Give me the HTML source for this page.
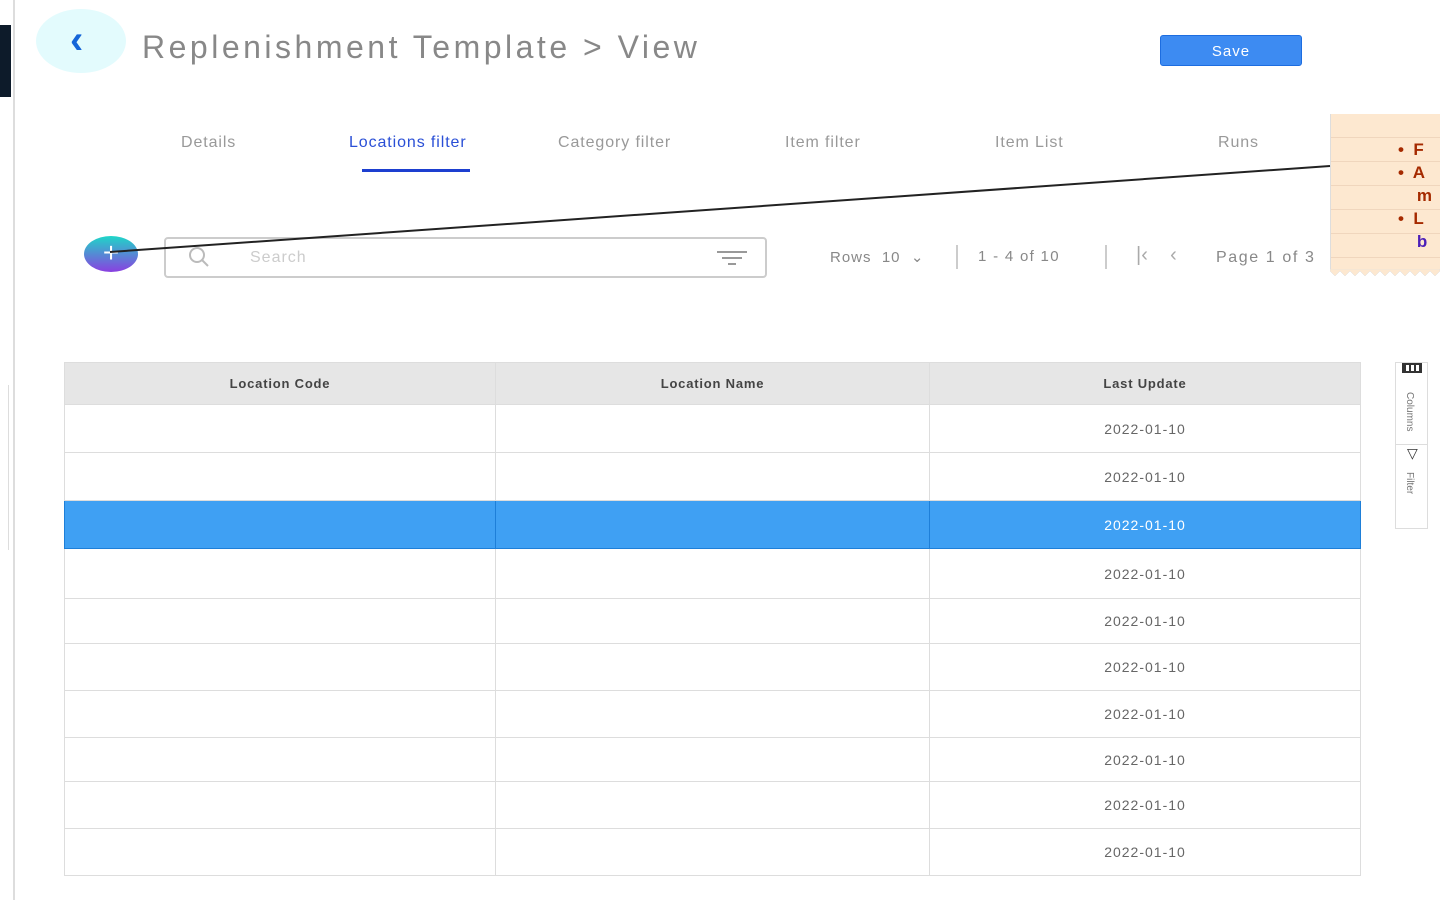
<!DOCTYPE html>
<html><head><style>
body{margin:0;width:1440px;height:900px;background:#fff;font-family:"Liberation Sans",sans-serif;position:relative;overflow:hidden}
.a{position:absolute}
.tab{position:absolute;top:134px;font-size:16px;color:#999;letter-spacing:0.9px}
table{position:absolute;left:64px;top:362px;border-collapse:collapse;width:1297px}
td,th{border:1px solid #ddd;text-align:center;font-size:14px;color:#666;padding:0;letter-spacing:1px}
th{background:#e6e6e6;color:#444;font-size:13px;height:41px;letter-spacing:0.8px}
</style></head><body>
<div class="a" style="left:0;top:25px;width:11px;height:72px;background:#0d1b2a"></div>
<div class="a" style="left:13px;top:0;width:2px;height:900px;background:#ddd"></div>
<div class="a" style="left:0;top:385px;width:8px;height:165px;border-right:1px solid #ddd"></div>
<div class="a" style="left:36px;top:9px;width:90px;height:64px;border-radius:50%;background:#e3fbfd"></div>
<div class="a" style="left:70px;top:18px;font-size:40px;color:#1565d8;font-weight:bold">&lsaquo;</div>
<div class="a" style="left:142px;top:29px;font-size:32px;color:#888;letter-spacing:3.5px">Replenishment Template &gt; View</div>
<div class="a" style="left:1160px;top:35px;width:142px;height:31px;background:#3d8bf2;border:1px solid #1d6de0;border-radius:3px;color:#fff;font-size:15px;text-align:center;line-height:31px;box-sizing:border-box;letter-spacing:1px">Save</div>
<div class="tab" style="left:181px">Details</div>
<div class="tab" style="left:349px;color:#2a4fd6">Locations filter</div>
<div class="a" style="left:362px;top:169px;width:108px;height:3px;background:#1d3fd0"></div>
<div class="tab" style="left:558px">Category filter</div>
<div class="tab" style="left:785px">Item filter</div>
<div class="tab" style="left:995px">Item List</div>
<div class="tab" style="left:1218px">Runs</div>
<div class="a" style="left:84px;top:236px;width:54px;height:36px;border-radius:50%;background:linear-gradient(#1fd6c8,#8a3fe0);color:#fff;font-size:28px;text-align:center;line-height:34px">+</div>
<div class="a" style="left:164px;top:237px;width:603px;height:41px;border:2px solid #ccc;border-radius:4px;box-sizing:border-box"></div>
<svg class="a" style="left:186px;top:246px" width="30" height="24"><circle cx="11" cy="9" r="7" fill="none" stroke="#bbb" stroke-width="2"/><line x1="16" y1="14" x2="22" y2="20" stroke="#bbb" stroke-width="2"/></svg>
<div class="a" style="left:250px;top:249px;font-size:16px;color:#ccc;letter-spacing:1px">Search</div>
<svg class="a" style="left:716px;top:250px" width="32" height="16"><path d="M1 2h30M6 8h20M12 14h8" stroke="#999" stroke-width="2"/></svg>
<div class="a" style="left:830px;top:248px;font-size:15px;color:#888;letter-spacing:1px">Rows&nbsp; 10 &nbsp;&#8964;</div>
<div class="a" style="left:956px;top:245px;width:2px;height:24px;background:#ccc"></div>
<div class="a" style="left:978px;top:248px;font-size:15px;color:#888;letter-spacing:1.3px">1 - 4 of 10</div>
<div class="a" style="left:1105px;top:245px;width:2px;height:24px;background:#ccc"></div>
<div class="a" style="left:1136px;top:244px;font-size:20px;color:#aaa">|&lsaquo;&nbsp;&nbsp;&nbsp;&nbsp;&lsaquo;</div>
<div class="a" style="left:1216px;top:249px;font-size:16px;color:#888;letter-spacing:1.6px">Page 1 of 3</div>
<div class="a" style="left:1330px;top:114px;width:120px;height:156px;background:repeating-linear-gradient(#fde8d0 0,#fde8d0 23px,#f0d6bd 23px,#f0d6bd 24px);border-left:1px solid #ddd"></div>
<svg class="a" style="left:1330px;top:269px" width="110" height="8"><path d="M0 0 L0 2 L5 7 L10 2 L15 7 L20 2 L25 7 L30 2 L35 7 L40 2 L45 7 L50 2 L55 7 L60 2 L65 7 L70 2 L75 7 L80 2 L85 7 L90 2 L95 7 L100 2 L105 7 L110 2 L110 0 Z" fill="#fde8d0" stroke="#ddd" stroke-width="0.5"/></svg>
<div class="a" style="left:1398px;top:138px;font-size:17px;line-height:23px;font-weight:bold;color:#a52a00">•&nbsp; F<br>•&nbsp; A<br>&nbsp;&nbsp;&nbsp; m<br>•&nbsp; L<br><span style="color:#4b1fb8">&nbsp;&nbsp;&nbsp; b</span></div>
<svg class="a" style="left:0;top:0" width="1440" height="300"><line x1="110" y1="252" x2="1330" y2="166" stroke="#222" stroke-width="2"/></svg>
<table>
<tr><th style="width:430px">Location Code</th><th style="width:433px">Location Name</th><th>Last Update</th></tr>
<tr style="height:48px"><td></td><td></td><td>2022-01-10</td></tr>
<tr style="height:48px"><td></td><td></td><td>2022-01-10</td></tr>
<tr style="height:48px;background:#3fa0f3"><td style="border-color:#1e7fd8"></td><td style="border-color:#1e7fd8"></td><td style="border-color:#1e7fd8;color:#fff">2022-01-10</td></tr>
<tr style="height:50px"><td></td><td></td><td>2022-01-10</td></tr>
<tr style="height:45px"><td></td><td></td><td>2022-01-10</td></tr>
<tr style="height:47px"><td></td><td></td><td>2022-01-10</td></tr>
<tr style="height:47px"><td></td><td></td><td>2022-01-10</td></tr>
<tr style="height:44px"><td></td><td></td><td>2022-01-10</td></tr>
<tr style="height:47px"><td></td><td></td><td>2022-01-10</td></tr>
<tr style="height:47px"><td></td><td></td><td>2022-01-10</td></tr>
</table>
<div class="a" style="left:1395px;top:362px;width:33px;height:167px;border:1px solid #ddd;box-sizing:border-box"></div>
<div class="a" style="left:1395px;top:444px;width:33px;height:1px;background:#ddd"></div>
<div class="a" style="left:1402px;top:363px;width:20px;height:10px;border:2px solid #333;box-sizing:border-box;background:repeating-linear-gradient(90deg,#333 0 2px,#fff 2px 5px)"></div>
<div class="a" style="left:1404px;top:392px;font-size:10px;color:#777;writing-mode:vertical-rl">Columns</div>
<div class="a" style="left:1407px;top:445px;font-size:14px;color:#333">&#9661;</div>
<div class="a" style="left:1404px;top:472px;font-size:10px;color:#777;writing-mode:vertical-rl">Filter</div>
</body></html>
